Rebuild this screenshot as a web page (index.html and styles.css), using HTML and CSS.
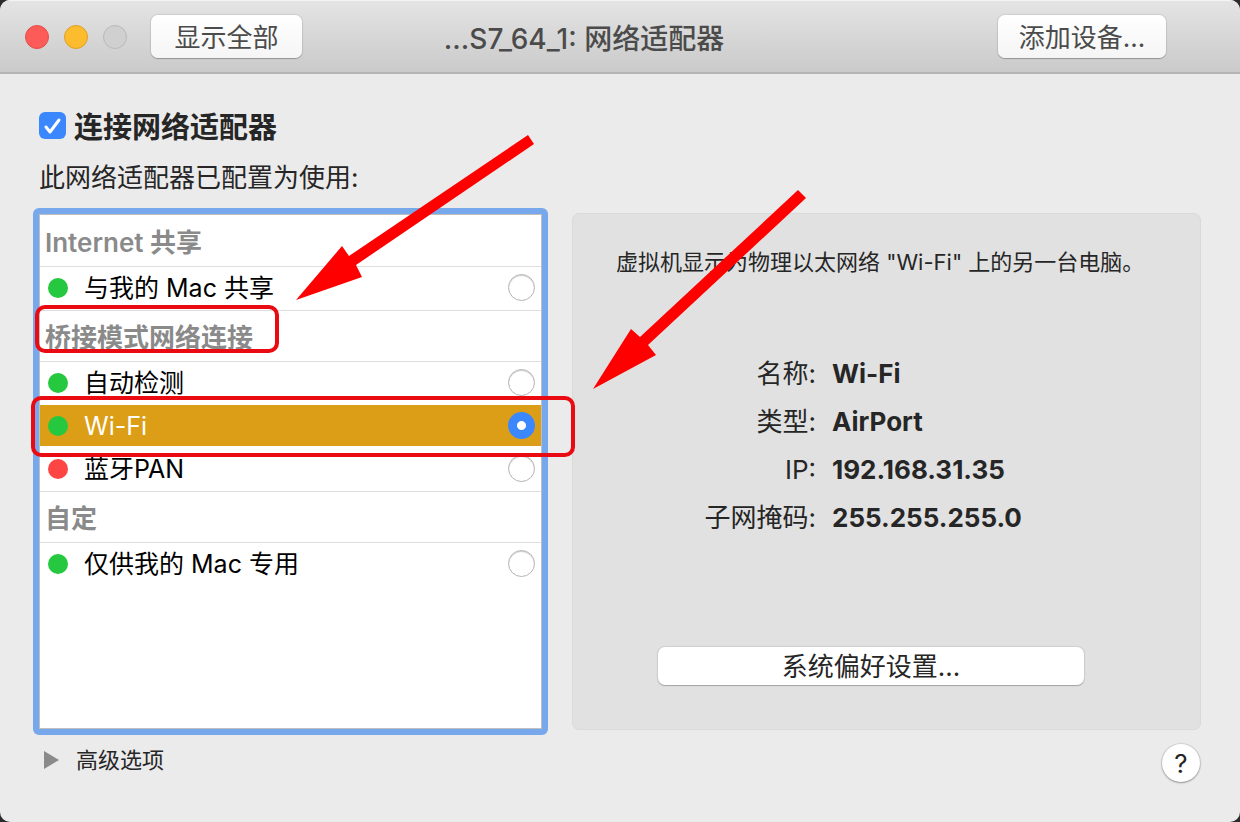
FILE: index.html
```html
<!DOCTYPE html>
<html lang="zh-CN">
<head>
  <meta charset="UTF-8">
  <title>网络适配器</title>
  <link rel="stylesheet" href="styles.css">
</head>
<body>
  <div class="window">
    <header class="titlebar">
      <div class="lights">
        <button class="light close" aria-label="关闭"></button>
        <button class="light minimize" aria-label="最小化"></button>
        <button class="light zoom" aria-label="缩放" disabled></button>
      </div>
      <button class="btn show-all">显示全部</button>
      <h1>...S7_64_1: 网络适配器</h1>
      <button class="btn add-device">添加设备...</button>
    </header>

    <main class="content">
      <label class="connect">
        <input type="checkbox" checked>
        <span>连接网络适配器</span>
      </label>
      <p class="hint">此网络适配器已配置为使用:</p>

      <div class="columns">
        <div class="list">
          <h2>Internet 共享</h2>
          <div class="group">
            <label class="row"><i class="dot"></i><span>与我的 Mac 共享</span><input type="radio" name="net"></label>
          </div>
          <h2><span class="marked-title">桥接模式网络连接</span></h2>
          <div class="group">
            <label class="row"><i class="dot"></i><span>自动检测</span><input type="radio" name="net"></label>
            <label class="row selected"><i class="dot"></i><span>Wi-Fi</span><input type="radio" name="net" checked></label>
            <label class="row"><i class="dot off"></i><span>蓝牙PAN</span><input type="radio" name="net"></label>
          </div>
          <h2>自定</h2>
          <div class="group last">
            <label class="row"><i class="dot"></i><span>仅供我的 Mac 专用</span><input type="radio" name="net"></label>
          </div>
        </div>

        <section class="panel">
          <p>虚拟机显示为物理以太网络 "Wi-Fi" 上的另一台电脑。</p>
          <dl>
            <dt>名称:</dt><dd>Wi-Fi</dd>
            <dt>类型:</dt><dd>AirPort</dd>
            <dt>IP:</dt><dd>192.168.31.35</dd>
            <dt>子网掩码:</dt><dd>255.255.255.0</dd>
          </dl>
          <button class="btn prefs">系统偏好设置...</button>
        </section>
      </div>

      <footer class="footer">
        <button class="advanced">
          <svg width="15" height="18" viewBox="0 0 15 18"><path d="M0 0L15 9L0 18Z" fill="#8a8a8a"/></svg>
          高级选项
        </button>
        <button class="help" aria-label="帮助">?</button>
      </footer>
    </main>

    <!-- pointers to the group title and the chosen adapter -->
    <svg class="arrows" width="820" height="400" viewBox="0 0 820 400">
      <g fill="#fe0000">
        <path d="M528 135L534 144L356 265L362 277L296 300L342 246L349 256Z"/>
        <path d="M798 190L806 198L648 345L656 355L593 389L631 329L640 337Z"/>
      </g>
    </svg>
  </div>
</body>
</html>
```

FILE: styles.css
```css
* {
  box-sizing: border-box;
}

body {
  margin: 0;
  background: #2b2b2d;
  font-family: Inter, "Noto Sans CJK SC", sans-serif;
  font-size: 26px;
  line-height: 36px;
  color: #262626;
}

button {
  font-family: inherit;
  padding: 0;
  border: none;
  color: inherit;
}

h1, h2, p, dl, dd {
  margin: 0;
}

.window {
  position: relative;
  display: flex;
  flex-direction: column;
  min-height: 100vh;
  background: #ebebeb;
  border-radius: 10px;
  overflow: hidden;
}

.titlebar {
  display: flex;
  align-items: center;
  height: 74px;
  padding: 0 74px 0 25px;
  background: linear-gradient(#e4e4e4, #cacaca);
  border-top: 1px solid #f4f4f4;
  border-bottom: 2px solid #b4b4b4;
  color: #4b4b4b;
}

.lights {
  display: flex;
  gap: 15px;
  margin-right: 24px;
}

.light {
  width: 24px;
  height: 24px;
  border-radius: 50%;
}

.close {
  background: #fc5b57;
  border: 1px solid #e2504b;
}

.minimize {
  background: #fdbc2e;
  border: 1px solid #dfa023;
}

.zoom {
  background: #d0d0d0;
  border: 1px solid #b9b9b9;
}

.titlebar h1 {
  flex: 1;
  padding: 4px 132px 0 0;
  font-size: 28px;
  font-weight: 500;
  text-align: center;
}

.btn {
  padding-top: 2px;
  border-radius: 7px;
  background: linear-gradient(#ffffff, #f5f5f5);
  box-shadow: 0 0 1px 1px rgba(0, 0, 0, 0.08), 0 1px 1px rgba(0, 0, 0, 0.22);
  font-size: 26px;
  line-height: 36px;
}

.show-all {
  width: 151px;
  height: 43px;
}

.add-device {
  width: 168px;
  height: 43px;
}

.content {
  flex: 1;
  display: flex;
  flex-direction: column;
  padding: 34px 39px 0 33px;
}

.connect {
  display: flex;
  align-items: flex-start;
  gap: 8px;
  height: 40px;
  padding: 4px 0 0 6px;
  font-size: 29px;
  line-height: 32px;
  font-weight: 600;
}

.connect input {
  appearance: none;
  width: 27px;
  height: 27px;
  margin: 0;
  border-radius: 6px;
  background: #3b87fd url("data:image/svg+xml,%3Csvg xmlns='http://www.w3.org/2000/svg' viewBox='0 0 27 27'%3E%3Cpath d='M7 15L11 20L20 8' fill='none' stroke='white' stroke-width='3' stroke-linecap='round' stroke-linejoin='round'/%3E%3C/svg%3E");
}

.hint {
  padding: 12px 0 12px 6px;
}

.columns {
  flex: 1;
  display: grid;
  grid-template-columns: minmax(0, 515fr) minmax(0, 629fr);
  gap: 24px;
}

.list {
  padding-top: 2px;
  background: #ffffff;
  border: 6px solid #78a8ec;
  border-radius: 6px;
  box-shadow: inset 0 0 0 1px #bfbfbf;
  color: #000000;
}

.list h2 {
  height: 51px;
  margin: 0 1px;
  padding: 9px 0 0 5px;
  border-bottom: 1px solid #dedede;
  font-size: 26px;
  font-weight: 600;
  color: #8a8a8a;
}

.group {
  margin: 0 1px;
  border-bottom: 1px solid #dedede;
}

.group.last {
  border-bottom: none;
}

.row {
  position: relative;
  display: flex;
  align-items: center;
  height: 41px;
  margin-bottom: 2px;
  padding: 0 6px 0 8px;
  font-size: 25px;
}

.row span {
  flex: 1;
}

.dot {
  width: 20px;
  height: 20px;
  margin-right: 16px;
  border-radius: 50%;
  background: #25c83e;
}

.dot.off {
  background: #fd4643;
}

.row input {
  appearance: none;
  width: 27px;
  height: 27px;
  margin: 0;
  border: 1px solid #b5b5b5;
  border-radius: 50%;
  background: #ffffff;
  box-shadow: inset 0 1px 1px rgba(0, 0, 0, 0.2);
}

.row input:checked {
  border: none;
  background: radial-gradient(circle, #ffffff 4px, #3b87fd 5px);
  box-shadow: none;
}

.selected {
  background: #dc9e17;
  color: #ffffff;
}

/* red frames */
.marked-title {
  position: relative;
}

.marked-title::after,
.selected::after {
  content: "";
  position: absolute;
  border: 4px solid #ea0a12;
  border-radius: 10px;
}

.marked-title::after {
  inset: -17px -26px 0 -10px;
}

.selected::after {
  z-index: 1;
  inset: -9px -34px -11px -9px;
}

.panel {
  display: flex;
  flex-direction: column;
  align-items: center;
  margin: 5px 0;
  padding: 32px 74px 44px 43px;
  background: #e1e1e1;
  border: 1px solid #dadada;
  border-radius: 7px;
}

.panel p {
  align-self: flex-start;
  font-size: 22px;
  line-height: 32px;
  white-space: nowrap;
}

.panel dl {
  display: grid;
  grid-template-columns: 200px 1fr;
  gap: 12px 16px;
  align-self: stretch;
  margin-top: 78px;
}

.panel dt {
  text-align: right;
}

.panel dd {
  font-weight: 700;
}

.prefs {
  width: 426px;
  height: 38px;
  margin-top: auto;
  background: #ffffff;
}

.footer {
  display: flex;
  justify-content: space-between;
  align-items: flex-start;
  height: 87px;
  padding: 9px 1px 0 11px;
}

.advanced {
  display: flex;
  align-items: center;
  gap: 17px;
  background: none;
  font-size: 22px;
  line-height: 32px;
}

.help {
  width: 38px;
  height: 38px;
  border-radius: 50%;
  background: #ffffff;
  box-shadow: 0 0 1px 1px rgba(0, 0, 0, 0.1), 0 1px 2px rgba(0, 0, 0, 0.3);
  font-size: 26px;
}

.arrows {
  position: absolute;
  top: 0;
  left: 0;
  pointer-events: none;
}
```
